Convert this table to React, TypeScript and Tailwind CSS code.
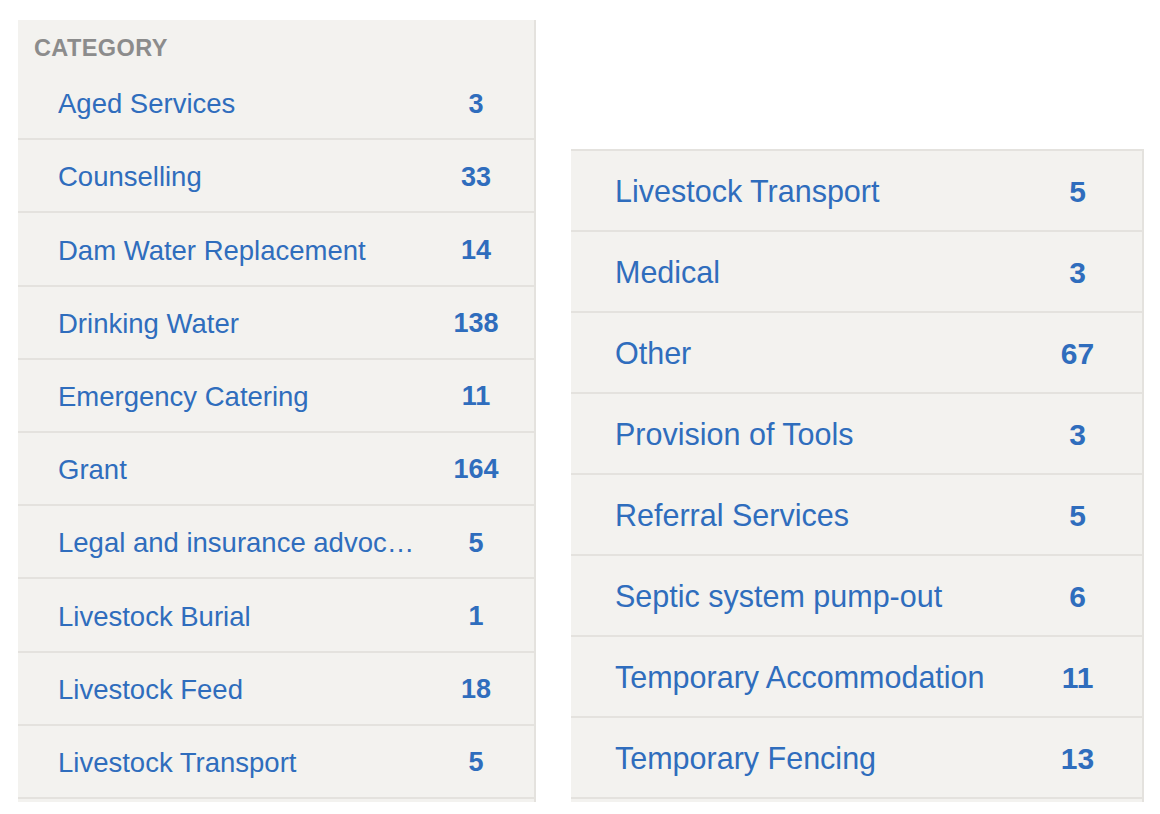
const LEFT = [
  { name: 'Aged Services', count: 3 },
  { name: 'Counselling', count: 33 },
  { name: 'Dam Water Replacement', count: 14 },
  { name: 'Drinking Water', count: 138 },
  { name: 'Emergency Catering', count: 11 },
  { name: 'Grant', count: 164 },
  { name: 'Legal and insurance advocacy', count: 5 },
  { name: 'Livestock Burial', count: 1 },
  { name: 'Livestock Feed', count: 18 },
  { name: 'Livestock Transport', count: 5 },
  { name: 'Medical', count: 3 },
]

const RIGHT = [
  { name: 'Livestock Transport', count: 5 },
  { name: 'Medical', count: 3 },
  { name: 'Other', count: 67 },
  { name: 'Provision of Tools', count: 3 },
  { name: 'Referral Services', count: 5 },
  { name: 'Septic system pump-out', count: 6 },
  { name: 'Temporary Accommodation', count: 11 },
  { name: 'Temporary Fencing', count: 13 },
  { name: 'Water Cartage', count: 9 },
]

type Item = { name: string; count: number }

export default function App() {
  return (
    <div className="flex min-h-screen items-start gap-[35px] bg-white px-[18px] pt-[20px] font-['Liberation_Sans',Arial,sans-serif]">
      {/* full-size facet list */}
      <section className="h-[782px] w-[518px] shrink-0 overflow-hidden border-r-2 border-[#e4e2de] bg-[#f3f2ef]">
        <h2 className="flex h-[47px] items-center pl-[16px] pt-[10px] text-[23.5px] leading-none font-bold tracking-[0.4px] text-[#8c8c8c] uppercase">
          Category
        </h2>
        <ul>
          {LEFT.map((item) => (
            <SmallRow key={item.name} item={item} />
          ))}
        </ul>
      </section>

      {/* same list, scrolled and zoomed */}
      <section className="mt-[129px] h-[653px] w-[573px] shrink-0 overflow-hidden border-t-2 border-r-2 border-[#e4e2de] bg-[#f3f2ef]">
        <ul>
          {RIGHT.map((item) => (
            <LargeRow key={item.name} item={item} />
          ))}
        </ul>
      </section>
    </div>
  )
}

function SmallRow({ item }: { item: Item }) {
  return (
    <li className="flex h-[73.2px] items-center gap-[16px] border-b-2 border-[#e4e2de] pt-[3px] pr-[16px] pl-[40px]">
      <a className="min-w-0 flex-1 truncate text-[27.5px] leading-[1.3] text-[#2f6dbd]">
        {item.name}
      </a>
      <span className="w-[84px] shrink-0 text-center text-[27px] leading-[1.3] font-bold text-[#2f6dbd]">
        {item.count}
      </span>
    </li>
  )
}

function LargeRow({ item }: { item: Item }) {
  return (
    <li className="flex h-[81px] items-center gap-[18px] border-b-2 border-[#e4e2de] pt-[2px] pr-[18px] pl-[44px]">
      <a className="min-w-0 flex-1 truncate text-[30.5px] leading-[1.3] text-[#2f6dbd]">
        {item.name}
      </a>
      <span className="w-[93px] shrink-0 text-center text-[30px] leading-[1.3] font-bold text-[#2f6dbd]">
        {item.count}
      </span>
    </li>
  )
}
